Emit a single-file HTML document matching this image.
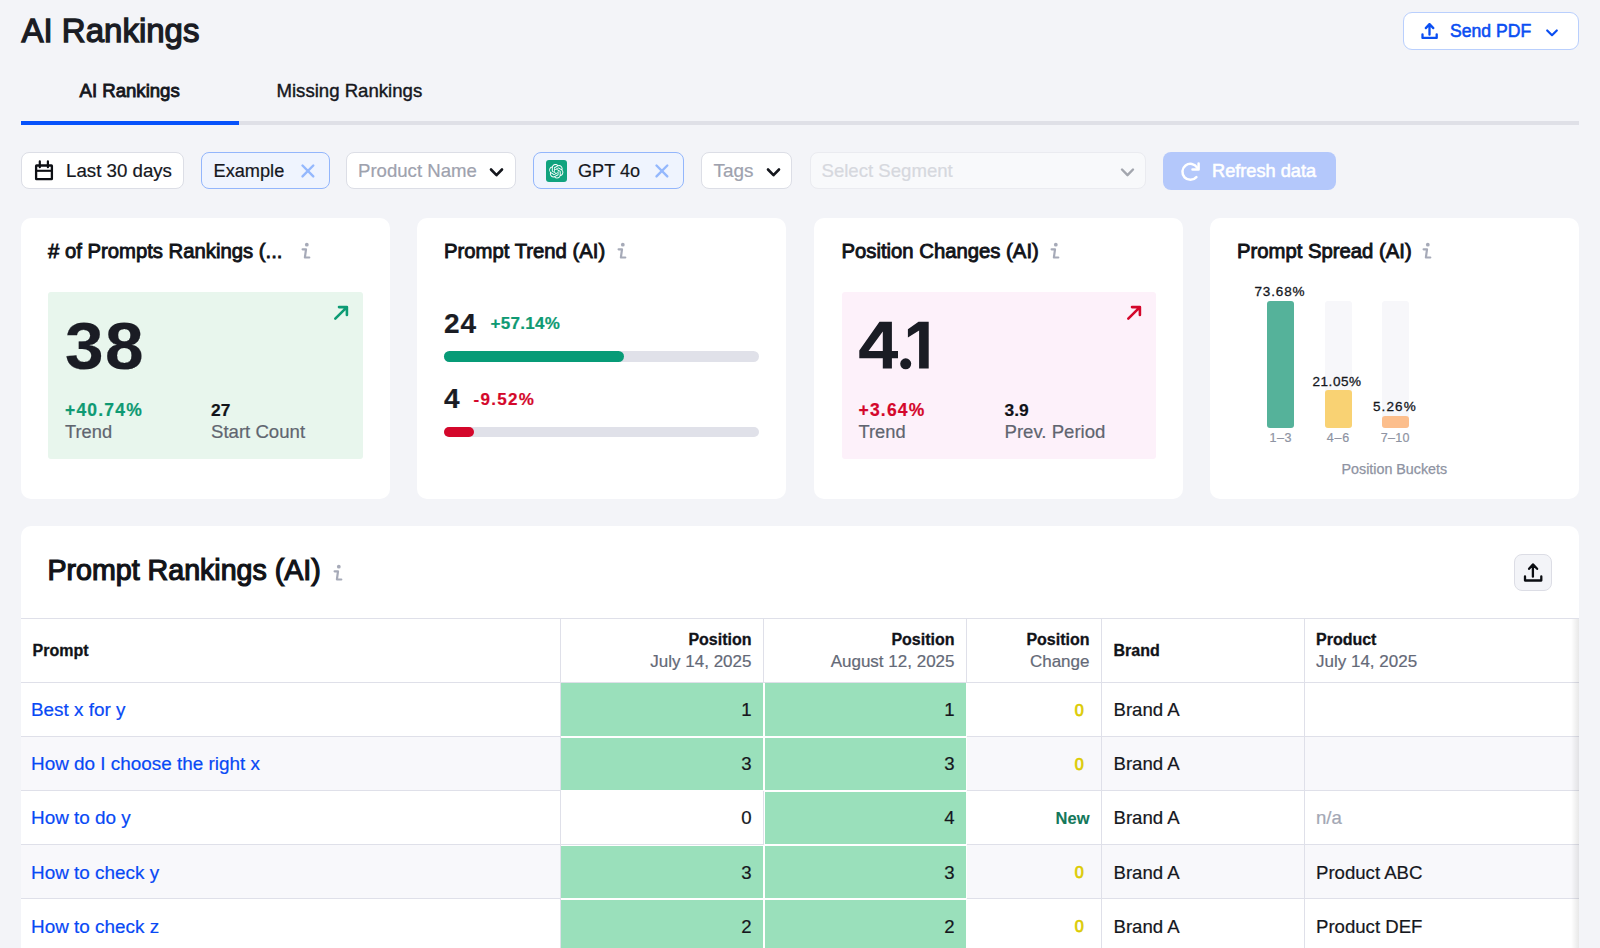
<!DOCTYPE html>
<html><head><meta charset="utf-8">
<style>
*{box-sizing:border-box;margin:0;padding:0}
html,body{width:1600px;height:948px;overflow:hidden}
body{background:#f3f4f8;font-family:"Liberation Sans",sans-serif;color:#1b1d24;position:relative}
.a{position:absolute;white-space:nowrap}
.t{position:absolute;white-space:nowrap;line-height:1;-webkit-text-stroke-width:0.2px}
svg{position:absolute;overflow:visible}
.chip{position:absolute;top:152px;height:37px;border:1px solid #dcdee6;border-radius:8px;background:#fff}
.card{position:absolute;top:218px;width:369px;height:281.3px;background:#fff;border-radius:10px}
.ctitle{font-size:20.3px;font-weight:400;color:#111318;-webkit-text-stroke:0.85px #111318}
.info{width:12px;height:18px}
</style></head><body>

<!-- Header -->
<div class="t" style="left:21.5px;top:14.3px;font-size:33px;color:#1a1c24;-webkit-text-stroke:1.3px #1a1c24">AI Rankings</div>

<div class="a" style="left:1403px;top:12px;width:176px;height:38px;border:1px solid #b9cffd;border-radius:9px;background:#fff"></div>
<svg style="left:1415px;top:17px" width="30" height="28" viewBox="0 0 30 28"><path d="M7.5 17.3V20.9H21.7V17.3M14.5 7.2V17.7M10.8 11.1L14.5 7.1L18.3 11.1" fill="none" stroke="#0a4ef2" stroke-width="2.3" stroke-linecap="round" stroke-linejoin="round"/></svg>
<div class="t" style="left:1450px;top:23px;font-size:17.6px;color:#0a4ef2;-webkit-text-stroke:0.55px #0a4ef2">Send PDF</div>
<svg style="left:1546px;top:28.7px" width="12" height="8" viewBox="0 0 12 8"><path d="M1.2 1.5L6 6.2L10.8 1.5" fill="none" stroke="#0a4ef2" stroke-width="2.2" stroke-linecap="round" stroke-linejoin="round"/></svg>

<!-- Tabs -->
<div class="t" style="left:79.5px;top:82px;font-size:18.6px;color:#15171d;-webkit-text-stroke:0.85px #15171d">AI Rankings</div>
<div class="t" style="left:276.5px;top:82px;font-size:18.6px;font-weight:400;color:#15171d;-webkit-text-stroke:0.4px #15171d">Missing Rankings</div>
<div class="a" style="left:21px;top:121px;width:1558px;height:4px;background:#dfe0e7"></div>
<div class="a" style="left:21px;top:121px;width:218px;height:4px;background:#0652fb"></div>

<!-- Filters -->
<div class="chip" style="left:21px;width:163px"></div>
<svg style="left:34px;top:159px" width="20" height="22" viewBox="0 0 20 22"><rect x="2.1" y="6.5" width="15.8" height="13.6" rx="0.4" fill="none" stroke="#0d0f14" stroke-width="2.3"/><path d="M2.5 11.8H17.5" stroke="#0d0f14" stroke-width="2.1"/><path d="M5.8 2.4V8.2M13.9 2.4V8.2" stroke="#0d0f14" stroke-width="2.2" stroke-linecap="round"/></svg>
<div class="t" style="left:66px;top:162px;font-size:18.7px;color:#15171d">Last 30 days</div>

<div class="chip" style="left:201px;width:129px;background:#eff4fe;border-color:#93b6fc"></div>
<div class="t" style="left:213.5px;top:162px;font-size:18.2px;color:#15171d">Example</div>
<svg style="left:300.5px;top:164px" width="14" height="14" viewBox="0 0 14 14"><path d="M1.5 1.5L12.3 12.4M12.3 1.5L1.5 12.4" stroke="#94b8fd" stroke-width="2.4" stroke-linecap="round"/></svg>

<div class="chip" style="left:346px;width:170px"></div>
<div class="t" style="left:358px;top:162px;font-size:18.6px;color:#9ea2ae">Product Name</div>
<svg style="left:489px;top:167px" width="15" height="12" viewBox="0 0 15 12"><path d="M2 2.5L7.5 8.2L13 2.5" fill="none" stroke="#15171d" stroke-width="2.6" stroke-linecap="round" stroke-linejoin="round"/></svg>

<div class="chip" style="left:533px;width:151px;background:#eff4fe;border-color:#93b6fc"></div>
<div class="a" style="left:545.5px;top:160px;width:21.5px;height:22px;background:#10a37f;border-radius:3px"></div>
<svg style="left:549px;top:164px" width="14.5" height="14.5" viewBox="0 0 24 24"><path fill="#fff" d="M22.2819 9.8211a5.9847 5.9847 0 0 0-.5157-4.9108 6.0462 6.0462 0 0 0-6.5098-2.9A6.0651 6.0651 0 0 0 4.9807 4.1818a5.9847 5.9847 0 0 0-3.9977 2.9 6.0462 6.0462 0 0 0 .7427 7.0966 5.98 5.98 0 0 0 .511 4.9107 6.051 6.051 0 0 0 6.5146 2.9001A5.9847 5.9847 0 0 0 13.2599 24a6.0557 6.0557 0 0 0 5.7718-4.2058 5.9894 5.9894 0 0 0 3.9977-2.9001 6.0557 6.0557 0 0 0-.7475-7.0729zm-9.022 12.6081a4.4755 4.4755 0 0 1-2.8764-1.0408l.1419-.0804 4.7783-2.7582a.7948.7948 0 0 0 .3927-.6813v-6.7369l2.02 1.1686a.071.071 0 0 1 .038.052v5.5826a4.504 4.504 0 0 1-4.4945 4.4944zm-9.6607-4.1254a4.4708 4.4708 0 0 1-.5346-3.0137l.142.0852 4.783 2.7582a.7712.7712 0 0 0 .7806 0l5.8428-3.3685v2.3324a.0804.0804 0 0 1-.0332.0615L9.74 19.9502a4.4992 4.4992 0 0 1-6.1408-1.6464zM2.3408 7.8956a4.485 4.485 0 0 1 2.3655-1.9728V11.6a.7664.7664 0 0 0 .3879.6765l5.8144 3.3543-2.0201 1.1685a.0757.0757 0 0 1-.071 0l-4.8303-2.7865A4.504 4.504 0 0 1 2.3408 7.872zm16.5963 3.8558L13.1038 8.364 15.1192 7.2a.0757.0757 0 0 1 .071 0l4.8303 2.7913a4.4944 4.4944 0 0 1-.6765 8.1042v-5.6772a.79.79 0 0 0-.407-.667zm2.0107-3.0231l-.142-.0852-4.7735-2.7818a.7759.7759 0 0 0-.7854 0L9.409 9.2297V6.8974a.0662.0662 0 0 1 .0284-.0615l4.8303-2.7866a4.4992 4.4992 0 0 1 6.6802 4.66zM8.3065 12.863l-2.02-1.1638a.0804.0804 0 0 1-.038-.0567V6.0742a4.4992 4.4992 0 0 1 7.3757-3.4537l-.142.0805L8.704 5.459a.7948.7948 0 0 0-.3927.6813zm1.0976-2.3654l2.602-1.4998 2.6069 1.4998v2.9994l-2.5974 1.4997-2.6067-1.4997Z"/></svg>
<div class="t" style="left:578px;top:162px;font-size:18.1px;color:#15171d">GPT 4o</div>
<svg style="left:655px;top:164px" width="14" height="14" viewBox="0 0 14 14"><path d="M1.5 1.5L12.3 12.4M12.3 1.5L1.5 12.4" stroke="#94b8fd" stroke-width="2.4" stroke-linecap="round"/></svg>

<div class="chip" style="left:701px;width:91px"></div>
<div class="t" style="left:713.5px;top:162px;font-size:18.9px;color:#9ea2ae">Tags</div>
<svg style="left:765.5px;top:167px" width="15" height="12" viewBox="0 0 15 12"><path d="M2 2.5L7.5 8.2L13 2.5" fill="none" stroke="#15171d" stroke-width="2.6" stroke-linecap="round" stroke-linejoin="round"/></svg>

<div class="chip" style="left:810px;width:336px;background:#f8f9fb;border-color:#eaebf0"></div>
<div class="t" style="left:821.5px;top:162px;font-size:18.6px;color:#d6d8de">Select Segment</div>
<svg style="left:1119.5px;top:167px" width="15" height="12" viewBox="0 0 15 12"><path d="M2 2.5L7.5 8.2L13 2.5" fill="none" stroke="#a3a6ae" stroke-width="2.4" stroke-linecap="round" stroke-linejoin="round"/></svg>

<div class="a" style="left:1163px;top:152px;width:173px;height:38px;background:#b4c8fb;border-radius:8px"></div>
<svg style="left:1180px;top:161.6px" width="21" height="20" viewBox="0 0 21 20"><path d="M16.4 15.2A8 8 0 1 1 17.2 5.6" fill="none" stroke="#fff" stroke-width="2.5" stroke-linecap="round"/><path d="M12.5 7.6H18.6V1.5" fill="none" stroke="#fff" stroke-width="2.5" stroke-linecap="round" stroke-linejoin="round"/></svg>
<div class="t" style="left:1212px;top:161.6px;font-size:18.2px;color:#fff;-webkit-text-stroke:0.55px #fff">Refresh data</div>

<!-- Cards -->
<div class="card" style="left:21px"></div>
<div class="card" style="left:417px"></div>
<div class="card" style="left:814px"></div>
<div class="card" style="left:1210px"></div>

<!-- card 1 -->
<div class="t ctitle" style="left:48px;top:241px">#&nbsp;of Prompts Rankings (...</div>
<svg class="info" style="left:301px;top:242px" viewBox="0 0 12 18"><circle cx="5.8" cy="2.7" r="1.9" fill="#a6aab8"/><path d="M1.6 7.3H5L3.9 15.5H8.3" fill="none" stroke="#a6aab8" stroke-width="2.2" stroke-linecap="round" stroke-linejoin="round"/></svg>
<div class="a" style="left:48px;top:291.5px;width:314.5px;height:167px;background:#e8f6ed;border-radius:3px"></div>
<svg style="left:333px;top:305px" width="16" height="16" viewBox="0 0 16 16"><path d="M2.3 13.6L13.9 2.1M6 2.1H13.9V9.9" fill="none" stroke="#0d9b74" stroke-width="2.6" stroke-linecap="round" stroke-linejoin="round"/></svg>
<div class="t" style="left:64.5px;top:313px;font-size:66px;font-weight:700;color:#1a1c24;letter-spacing:1.5px;transform:scaleX(1.05);transform-origin:0 0">38</div>
<div class="t" style="left:65px;top:402px;font-size:17.5px;font-weight:700;color:#0e9a73;letter-spacing:1.2px">+40.74%</div>
<div class="t" style="left:65px;top:423px;font-size:18.3px;color:#60656f">Trend</div>
<div class="t" style="left:211px;top:402px;font-size:17.4px;font-weight:700;color:#111318">27</div>
<div class="t" style="left:211px;top:423px;font-size:18.6px;color:#60656f">Start Count</div>

<!-- card 2 -->
<div class="t ctitle" style="left:444px;top:241px">Prompt Trend (AI)</div>
<svg class="info" style="left:617px;top:242px" viewBox="0 0 12 18"><circle cx="5.8" cy="2.7" r="1.9" fill="#a6aab8"/><path d="M1.6 7.3H5L3.9 15.5H8.3" fill="none" stroke="#a6aab8" stroke-width="2.2" stroke-linecap="round" stroke-linejoin="round"/></svg>
<div class="t" style="left:444px;top:309.5px;font-size:28px;font-weight:700;color:#1a1c24;letter-spacing:1px">24</div>
<div class="t" style="left:490.5px;top:315px;font-size:17px;font-weight:700;color:#0e9a73;letter-spacing:0.3px">+57.14%</div>
<div class="a" style="left:444px;top:351px;width:314.5px;height:10.5px;background:#e0e1e9;border-radius:6px"></div>
<div class="a" style="left:444px;top:351px;width:179.5px;height:10.5px;background:#079b77;border-radius:6px"></div>
<div class="t" style="left:444px;top:385px;font-size:28px;font-weight:700;color:#1a1c24">4</div>
<div class="t" style="left:473.5px;top:391px;font-size:17px;font-weight:700;color:#d4072b;letter-spacing:1.3px">-9.52%</div>
<div class="a" style="left:444px;top:426.5px;width:314.5px;height:10.5px;background:#e0e1e9;border-radius:6px"></div>
<div class="a" style="left:444px;top:426.5px;width:29.5px;height:10.5px;background:#d4072b;border-radius:6px"></div>

<!-- card 3 -->
<div class="t ctitle" style="left:841.5px;top:241px">Position Changes (AI)</div>
<svg class="info" style="left:1050px;top:242px" viewBox="0 0 12 18"><circle cx="5.8" cy="2.7" r="1.9" fill="#a6aab8"/><path d="M1.6 7.3H5L3.9 15.5H8.3" fill="none" stroke="#a6aab8" stroke-width="2.2" stroke-linecap="round" stroke-linejoin="round"/></svg>
<div class="a" style="left:841.5px;top:291.5px;width:314.5px;height:167px;background:#fdf1fa;border-radius:3px"></div>
<svg style="left:1126px;top:305px" width="16" height="16" viewBox="0 0 16 16"><path d="M2.3 13.6L13.9 2.1M6 2.1H13.9V9.9" fill="none" stroke="#d4072b" stroke-width="2.6" stroke-linecap="round" stroke-linejoin="round"/></svg>
<svg style="left:0;top:0" width="1600" height="948" viewBox="0 0 1600 948"><path fill="#1a1c24" fill-rule="evenodd" d="M879.5 321.7H891.9V351H898V358.3H891.9V368.6H882.8V358.3H859.3V350.4ZM882.8 331.6V351H868.5Z"/><circle cx="905.7" cy="363.8" r="5.5" fill="#1a1c24"/><path fill="#1a1c24" d="M918.5 321.7H928.7V368.6H919.1V330.6L907.9 337.4V329.2Z"/></svg>
<div class="t" style="left:858.5px;top:402px;font-size:17.5px;font-weight:700;color:#d4072b;letter-spacing:1.2px">+3.64%</div>
<div class="t" style="left:858.5px;top:423px;font-size:18.3px;color:#60656f">Trend</div>
<div class="t" style="left:1004.5px;top:402px;font-size:17.4px;font-weight:700;color:#111318">3.9</div>
<div class="t" style="left:1004.5px;top:423px;font-size:18.6px;color:#60656f">Prev. Period</div>

<!-- card 4 -->
<div class="t ctitle" style="left:1237px;top:241px">Prompt Spread (AI)</div>
<svg class="info" style="left:1422px;top:242px" viewBox="0 0 12 18"><circle cx="5.8" cy="2.7" r="1.9" fill="#a6aab8"/><path d="M1.6 7.3H5L3.9 15.5H8.3" fill="none" stroke="#a6aab8" stroke-width="2.2" stroke-linecap="round" stroke-linejoin="round"/></svg>
<div class="a" style="left:1267px;top:301px;width:27px;height:126.5px;background:#55b29a;border-radius:3px"></div>
<div class="a" style="left:1324.5px;top:301px;width:27px;height:126.5px;background:#f7f7fa;border-radius:3px"></div>
<div class="a" style="left:1324.5px;top:390px;width:27px;height:37.5px;background:#f9d273;border-radius:3px"></div>
<div class="a" style="left:1381.5px;top:301px;width:27px;height:126.5px;background:#f7f7fa;border-radius:3px"></div>
<div class="a" style="left:1381.5px;top:415.5px;width:27px;height:12px;background:#fcbe8c;border-radius:3px"></div>
<div class="t" style="left:1254.5px;top:285.2px;font-size:13.5px;color:#15171d;letter-spacing:0.85px;-webkit-text-stroke:0.3px #15171d">73.68%</div>
<div class="t" style="left:1312.5px;top:374.6px;font-size:13.5px;color:#15171d;letter-spacing:0.55px;-webkit-text-stroke:0.3px #15171d">21.05%</div>
<div class="t" style="left:1373px;top:399.8px;font-size:13.5px;color:#15171d;letter-spacing:1.1px;-webkit-text-stroke:0.3px #15171d">5.26%</div>
<div class="t" style="left:1262px;width:37px;text-align:center;top:431.5px;font-size:12.5px;color:#8e93a2;letter-spacing:0.5px;text-indent:0.5px;-webkit-text-stroke:0.2px #8e93a2">1–3</div>
<div class="t" style="left:1319.5px;width:37px;text-align:center;top:431.5px;font-size:12.5px;color:#8e93a2;letter-spacing:0.8px;text-indent:0.8px;-webkit-text-stroke:0.2px #8e93a2">4–6</div>
<div class="t" style="left:1376.5px;width:37px;text-align:center;top:431.5px;font-size:12.5px;color:#8e93a2;letter-spacing:0.3px;text-indent:0.3px;-webkit-text-stroke:0.2px #8e93a2">7–10</div>
<div class="t" style="left:1341.5px;top:461.8px;font-size:14.3px;color:#8e93a2;-webkit-text-stroke:0.25px #8e93a2">Position Buckets</div>

<!-- Table card -->
<div class="a" style="left:21px;top:526.3px;width:1558px;height:500px;background:#fff;border-radius:10px;overflow:hidden" id="tcard"></div>
<div class="t" style="left:47.5px;top:556.3px;font-size:28.6px;color:#111318;-webkit-text-stroke:1.2px #111318">Prompt Rankings (AI)</div>
<svg style="left:333px;top:564px" width="12" height="18" viewBox="0 0 12 18"><circle cx="5.8" cy="2.7" r="1.9" fill="#a6aab8"/><path d="M1.6 7.3H5L3.9 15.5H8.3" fill="none" stroke="#a6aab8" stroke-width="2.2" stroke-linecap="round" stroke-linejoin="round"/></svg>
<div class="a" style="left:1514px;top:554px;width:37.5px;height:37px;background:#f3f4f8;border:1px solid #dcdde5;border-radius:8px"></div>
<svg style="left:1518px;top:558px" width="30" height="30" viewBox="0 0 30 30"><path d="M7 18.4V22.5H23.3V18.4M14.9 6.6V18.7M11.1 10.8L14.9 6.4L19.1 10.8" fill="none" stroke="#0b0d12" stroke-width="2.3" stroke-linecap="round" stroke-linejoin="round"/></svg>

<!-- TABLE -->
<div class="a" style="left:21px;top:618px;width:1558px;height:1px;background:#dfe0e9"></div>
<div class="a" style="left:21px;top:682px;width:1558px;height:1px;background:#dfe0e9"></div>
<div class="a" style="left:560px;top:619px;width:1px;height:63px;background:#dfe0e9"></div>
<div class="a" style="left:763px;top:619px;width:1px;height:63px;background:#dfe0e9"></div>
<div class="a" style="left:966px;top:619px;width:1px;height:63px;background:#dfe0e9"></div>
<div class="a" style="left:1101px;top:619px;width:1px;height:63px;background:#dfe0e9"></div>
<div class="a" style="left:1304px;top:619px;width:1px;height:63px;background:#dfe0e9"></div>
<div class="t" style="left:32.5px;top:642.5px;font-size:16px;font-weight:700;color:#111318;-webkit-text-stroke:0.3px #111318">Prompt</div>
<div class="t" style="right:848.5px;top:632.3px;font-size:16px;font-weight:700;color:#111318;-webkit-text-stroke:0.3px #111318">Position</div>
<div class="t" style="right:848.5px;top:653.1px;font-size:17px;color:#646977">July 14, 2025</div>
<div class="t" style="right:645.5px;top:632.3px;font-size:16px;font-weight:700;color:#111318;-webkit-text-stroke:0.3px #111318">Position</div>
<div class="t" style="right:645.5px;top:653.1px;font-size:17px;color:#646977">August 12, 2025</div>
<div class="t" style="right:510.5px;top:632.3px;font-size:16px;font-weight:700;color:#111318;-webkit-text-stroke:0.3px #111318">Position</div>
<div class="t" style="right:510.5px;top:653.1px;font-size:17px;color:#646977">Change</div>
<div class="t" style="left:1113.5px;top:643.0px;font-size:16px;font-weight:700;color:#111318;-webkit-text-stroke:0.3px #111318">Brand</div>
<div class="t" style="left:1316px;top:632.3px;font-size:16px;font-weight:700;color:#111318;-webkit-text-stroke:0.3px #111318">Product</div>
<div class="t" style="left:1316px;top:653.1px;font-size:17px;color:#646977">July 14, 2025</div>
<div class="a" style="left:21px;top:683px;width:1558px;height:54px;background:#fff;border-bottom:1px solid #dfe0e9"></div>
<div class="a" style="left:560px;top:683px;width:1px;height:54px;background:#dfe0e9"></div>
<div class="a" style="left:763px;top:683px;width:1px;height:54px;background:#dfe0e9"></div>
<div class="a" style="left:966px;top:683px;width:1px;height:54px;background:#dfe0e9"></div>
<div class="a" style="left:1101px;top:683px;width:1px;height:54px;background:#dfe0e9"></div>
<div class="a" style="left:1304px;top:683px;width:1px;height:54px;background:#dfe0e9"></div>
<div class="a" style="left:561px;top:683px;width:203px;height:54px;background:#9ae0bb;border-right:1px solid #fff;border-bottom:1px solid #fff;border-top:0px solid #fff"></div>
<div class="a" style="left:764px;top:683px;width:203px;height:54px;background:#9ae0bb;border-right:1px solid #fff;border-bottom:1px solid #fff;border-left:1px solid #fff;border-top:0px solid #fff"></div>
<div class="t" style="left:31px;top:701.2px;font-size:18.9px;color:#0849f5">Best x for y</div>
<div class="t" style="right:848.5px;top:701.2px;font-size:18.6px;color:#15171d">1</div>
<div class="t" style="right:645.5px;top:701.2px;font-size:18.6px;color:#15171d">1</div>
<div class="t" style="right:516.2px;top:701.8px;font-size:16.2px;color:#dccb00;-webkit-text-stroke:0.75px #dccb00">0</div>
<div class="t" style="left:1113.5px;top:701.2px;font-size:18.6px;color:#15171d">Brand A</div>
<div class="a" style="left:21px;top:737px;width:1558px;height:54px;background:#f8f8fb;border-bottom:1px solid #dfe0e9"></div>
<div class="a" style="left:560px;top:737px;width:1px;height:54px;background:#dfe0e9"></div>
<div class="a" style="left:763px;top:737px;width:1px;height:54px;background:#dfe0e9"></div>
<div class="a" style="left:966px;top:737px;width:1px;height:54px;background:#dfe0e9"></div>
<div class="a" style="left:1101px;top:737px;width:1px;height:54px;background:#dfe0e9"></div>
<div class="a" style="left:1304px;top:737px;width:1px;height:54px;background:#dfe0e9"></div>
<div class="a" style="left:561px;top:737px;width:203px;height:54px;background:#9ae0bb;border-right:1px solid #fff;border-bottom:1px solid #fff;border-top:1px solid #fff"></div>
<div class="a" style="left:764px;top:737px;width:203px;height:54px;background:#9ae0bb;border-right:1px solid #fff;border-bottom:1px solid #fff;border-left:1px solid #fff;border-top:1px solid #fff"></div>
<div class="t" style="left:31px;top:755.3px;font-size:18.9px;color:#0849f5">How do I choose the right x</div>
<div class="t" style="right:848.5px;top:755.3px;font-size:18.6px;color:#15171d">3</div>
<div class="t" style="right:645.5px;top:755.3px;font-size:18.6px;color:#15171d">3</div>
<div class="t" style="right:516.2px;top:755.8px;font-size:16.2px;color:#dccb00;-webkit-text-stroke:0.75px #dccb00">0</div>
<div class="t" style="left:1113.5px;top:755.3px;font-size:18.6px;color:#15171d">Brand A</div>
<div class="a" style="left:21px;top:791px;width:1558px;height:54px;background:#fff;border-bottom:1px solid #dfe0e9"></div>
<div class="a" style="left:560px;top:791px;width:1px;height:54px;background:#dfe0e9"></div>
<div class="a" style="left:763px;top:791px;width:1px;height:54px;background:#dfe0e9"></div>
<div class="a" style="left:966px;top:791px;width:1px;height:54px;background:#dfe0e9"></div>
<div class="a" style="left:1101px;top:791px;width:1px;height:54px;background:#dfe0e9"></div>
<div class="a" style="left:1304px;top:791px;width:1px;height:54px;background:#dfe0e9"></div>
<div class="a" style="left:764px;top:791px;width:203px;height:54px;background:#9ae0bb;border-right:1px solid #fff;border-bottom:1px solid #fff;border-left:1px solid #fff;border-top:1px solid #fff"></div>
<div class="t" style="left:31px;top:809.4px;font-size:18.9px;color:#0849f5">How to do y</div>
<div class="t" style="right:848.5px;top:809.4px;font-size:18.6px;color:#15171d">0</div>
<div class="t" style="right:645.5px;top:809.4px;font-size:18.6px;color:#15171d">4</div>
<div class="t" style="right:510.5px;top:810.0px;font-size:16.5px;font-weight:700;color:#13785a;-webkit-text-stroke:0.1px #13785a">New</div>
<div class="t" style="left:1113.5px;top:809.4px;font-size:18.6px;color:#15171d">Brand A</div>
<div class="t" style="left:1316px;top:809.4px;font-size:18.6px;color:#a3a7b4">n/a</div>
<div class="a" style="left:21px;top:845px;width:1558px;height:54px;background:#f8f8fb;border-bottom:1px solid #dfe0e9"></div>
<div class="a" style="left:560px;top:845px;width:1px;height:54px;background:#dfe0e9"></div>
<div class="a" style="left:763px;top:845px;width:1px;height:54px;background:#dfe0e9"></div>
<div class="a" style="left:966px;top:845px;width:1px;height:54px;background:#dfe0e9"></div>
<div class="a" style="left:1101px;top:845px;width:1px;height:54px;background:#dfe0e9"></div>
<div class="a" style="left:1304px;top:845px;width:1px;height:54px;background:#dfe0e9"></div>
<div class="a" style="left:561px;top:845px;width:203px;height:54px;background:#9ae0bb;border-right:1px solid #fff;border-bottom:1px solid #fff;border-top:1px solid #fff"></div>
<div class="a" style="left:764px;top:845px;width:203px;height:54px;background:#9ae0bb;border-right:1px solid #fff;border-bottom:1px solid #fff;border-left:1px solid #fff;border-top:1px solid #fff"></div>
<div class="t" style="left:31px;top:863.5px;font-size:18.9px;color:#0849f5">How to check y</div>
<div class="t" style="right:848.5px;top:863.5px;font-size:18.6px;color:#15171d">3</div>
<div class="t" style="right:645.5px;top:863.5px;font-size:18.6px;color:#15171d">3</div>
<div class="t" style="right:516.2px;top:863.8px;font-size:16.2px;color:#dccb00;-webkit-text-stroke:0.75px #dccb00">0</div>
<div class="t" style="left:1113.5px;top:863.5px;font-size:18.6px;color:#15171d">Brand A</div>
<div class="t" style="left:1316px;top:863.5px;font-size:18.6px;color:#15171d">Product ABC</div>
<div class="a" style="left:21px;top:899px;width:1558px;height:54px;background:#fff;border-bottom:1px solid #dfe0e9"></div>
<div class="a" style="left:560px;top:899px;width:1px;height:54px;background:#dfe0e9"></div>
<div class="a" style="left:763px;top:899px;width:1px;height:54px;background:#dfe0e9"></div>
<div class="a" style="left:966px;top:899px;width:1px;height:54px;background:#dfe0e9"></div>
<div class="a" style="left:1101px;top:899px;width:1px;height:54px;background:#dfe0e9"></div>
<div class="a" style="left:1304px;top:899px;width:1px;height:54px;background:#dfe0e9"></div>
<div class="a" style="left:561px;top:899px;width:203px;height:54px;background:#9ae0bb;border-right:1px solid #fff;border-bottom:1px solid #fff;border-top:1px solid #fff"></div>
<div class="a" style="left:764px;top:899px;width:203px;height:54px;background:#9ae0bb;border-right:1px solid #fff;border-bottom:1px solid #fff;border-left:1px solid #fff;border-top:1px solid #fff"></div>
<div class="t" style="left:31px;top:917.6px;font-size:18.9px;color:#0849f5">How to check z</div>
<div class="t" style="right:848.5px;top:917.6px;font-size:18.6px;color:#15171d">2</div>
<div class="t" style="right:645.5px;top:917.6px;font-size:18.6px;color:#15171d">2</div>
<div class="t" style="right:516.2px;top:917.8px;font-size:16.2px;color:#dccb00;-webkit-text-stroke:0.75px #dccb00">0</div>
<div class="t" style="left:1113.5px;top:917.6px;font-size:18.6px;color:#15171d">Brand A</div>
<div class="t" style="left:1316px;top:917.6px;font-size:18.6px;color:#15171d">Product DEF</div>
<div class="a" style="left:1571px;top:619px;width:8px;height:340px;background:linear-gradient(to right,rgba(0,0,0,0),rgba(0,0,0,0.09))"></div>
<!-- /TABLE -->
</body></html>
